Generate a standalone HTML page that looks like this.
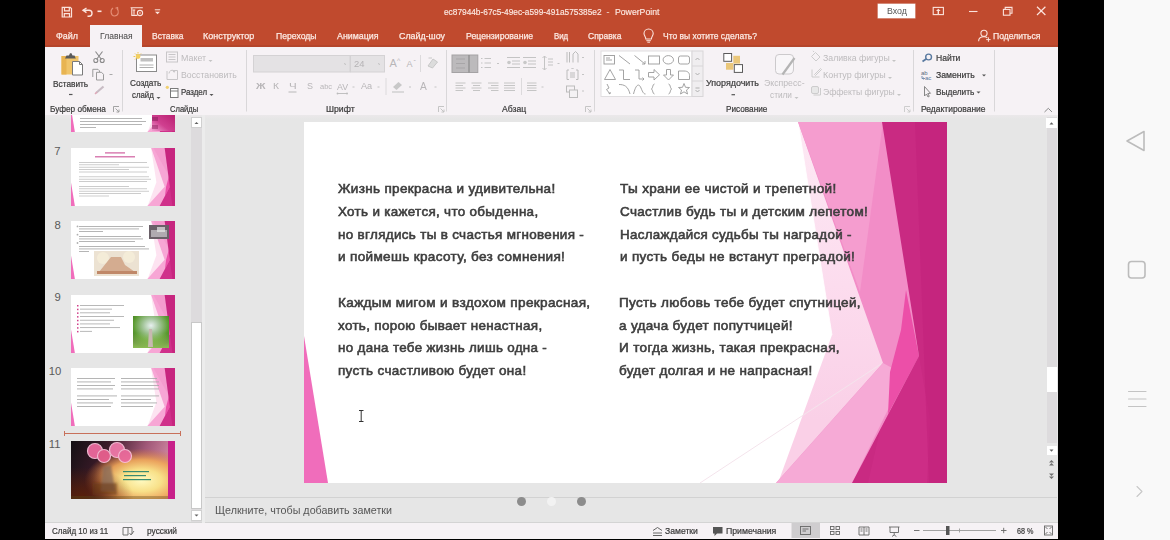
<!DOCTYPE html>
<html><head><meta charset="utf-8">
<style>
*{margin:0;padding:0;box-sizing:border-box}
html,body{width:1170px;height:540px;overflow:hidden;background:#000;font-family:"Liberation Sans",sans-serif}
body{position:relative}
.a{position:absolute}
.t{position:absolute;white-space:nowrap;line-height:1;transform-origin:0 0;color:#444}
svg{position:absolute;overflow:visible}
</style></head><body>
<!-- nav -->
<div class="a" style="left:1104px;top:0;width:66px;height:540px;background:#f9f9f9"></div>
<!-- window backgrounds -->
<div class="a" style="left:45px;top:0;width:1013px;height:539px;background:#e6e6e6"></div>
<div class="a" style="left:45px;top:0;width:1013px;height:47px;background:#c04a2e"></div>
<div class="a" style="left:45px;top:47px;width:1013px;height:68px;background:#f6f2f5"></div>
<div class="a" style="left:90px;top:25px;width:52px;height:23px;background:#f6f2f5"></div>
<div class="a ribbon-shadow" style="left:45px;top:115px;width:1013px;height:4px;background:linear-gradient(#ebe8ea,#e6e6e6)"></div>
<div class="a" style="left:45px;top:45px;width:45px;height:2px;background:#b4452b"></div><div class="a" style="left:142px;top:45px;width:916px;height:2px;background:#b4452b"></div>
<div class="a" style="left:45px;top:523px;width:1013px;height:16px;background:#f6f2f5"></div>
<div class="a" style="left:45px;top:522px;width:1013px;height:1px;background:#d4d4d4"></div>
<!-- thumbnail pane scrollbar -->
<div class="a" style="left:191px;top:117px;width:11px;height:405px;background:#dddbdd"></div>
<div class="a" style="left:191px;top:117px;width:11px;height:11px;background:#fff;border:1px solid #d0d0d0"></div>
<div class="a" style="left:191px;top:322px;width:11px;height:187px;background:#fff;border:1px solid #c8c8c8"></div>
<div class="a" style="left:191px;top:510px;width:11px;height:11px;background:#fff;border:1px solid #d0d0d0"></div>
<div class="a" style="left:202px;top:115px;width:3px;height:408px;background:#ececec"></div>
<!-- notes -->
<div class="a" style="left:205px;top:497px;width:852px;height:1px;background:#d2d2d2"></div>
<div class="a" style="left:516.5px;top:496.5px;width:9px;height:9px;border-radius:50%;background:#8c8c8c"></div>
<div class="a" style="left:546.5px;top:496.5px;width:9px;height:9px;border-radius:50%;background:#f2f2f2"></div>
<div class="a" style="left:576.5px;top:496.5px;width:9px;height:9px;border-radius:50%;background:#8c8c8c"></div>
<!-- main vertical scrollbar -->
<div class="a" style="left:1047px;top:117px;width:10px;height:326px;background:#dddbdd"></div>
<div class="a" style="left:1046px;top:118px;width:11px;height:10px;background:#fff"></div>
<div class="a" style="left:1047px;top:367px;width:10px;height:25px;background:#fff"></div>
<div class="a" style="left:1047px;top:446px;width:10px;height:9px;background:#fff"></div>
<!-- slide -->
<div class="a" style="left:304px;top:122px;width:643px;height:361px;background:#fff;overflow:hidden">
<svg style="left:0;top:0" width="643" height="361" viewBox="304 122 643 361">
<defs><linearGradient id="wedge" gradientUnits="userSpaceOnUse" x1="0" y1="122" x2="0" y2="420"><stop offset="0" stop-color="#fde9f4"/><stop offset="0.55" stop-color="#fcdcee"/><stop offset="1" stop-color="#fad0e7"/></linearGradient></defs>
<polygon points="798,122 832,335 778,483 947,483 947,122" fill="url(#wedge)"/>
<polyline points="798,122 832,335" stroke="#ffffff" stroke-width="1" fill="none" opacity="0.8"/>
<polygon points="798,122 883,363 776,483 947,483 947,122" fill="#f28dc7"/>
<polygon points="798,122 883,122 860,292" fill="#f59dcf"/>
<polygon points="776,483 883,363 905,375 852,483" fill="#f6aad6"/>

<polygon points="906,290 919,356 888,414 890,372 901,330" fill="#ec4fa8"/>
<polygon points="882,122 947,122 947,483 852,483 919,356" fill="#c92a82"/>
<polygon points="919,356 880,430 868,483 927,483 930,420" fill="#d4358f" opacity="0.35"/>
<polygon points="915,122 947,122 947,483 929,483" fill="#c2207a" opacity="0.45"/>
<line x1="700" y1="483" x2="881" y2="364" stroke="#f4e4ec" stroke-width="1"/>
<polygon points="304,336 328,483 304,483" fill="#f06dbb"/>
</svg>
</div>
<!-- thumbnails -->
<div class="a" style="left:71px;top:115px;width:104px;height:17px;overflow:hidden"><div class="a" style="left:0;top:-41px;width:104px;height:58px"><svg style="left:0px;top:0px;filter:blur(0.35px)" width="104" height="58" viewBox="0 0 104 58"><rect width="104" height="58" fill="#fff"/><g transform="scale(0.16174,0.16066)"><polygon points="495,0 528,213 474,361 643,361 643,0" fill="#fde3f1"/>
<polygon points="496,0 579,241 472,361 643,361 643,0" fill="#f7a6d5"/>
<polygon points="510,0 606,175 579,0" fill="#f291c8" opacity="0.5"/>
<polygon points="606,175 615,234 581,298 588,241" fill="#ec50a9"/>
<polygon points="615,234 548,361 643,361 643,234" fill="#d0308b"/>
<polygon points="579,0 643,0 643,361 627,361" fill="#c7267f"/>
<polygon points="0,214 24,361 0,361" fill="#f06dbb"/></g><rect x="9" y="44.0" width="62" height="0.85" fill="#a8a8a8"/><rect x="9" y="47.0" width="66" height="0.85" fill="#a8a8a8"/><rect x="9" y="50.0" width="62" height="0.85" fill="#a8a8a8"/><rect x="9" y="53.0" width="16" height="0.85" fill="#a8a8a8"/><defs><linearGradient id="g6" x1="0" y1="1" x2="1" y2="0"><stop offset="0" stop-color="#f0a0d0"/><stop offset="0.4" stop-color="#d04090"/><stop offset="1" stop-color="#b81e70"/></linearGradient></defs><rect x="81" y="40" width="23" height="17" fill="url(#g6)"/><rect x="81" y="43" width="6" height="4" fill="#902060" opacity="0.6"/><rect x="81" y="51" width="6" height="4" fill="#902060" opacity="0.5"/></svg></div></div>
<svg style="left:71px;top:148px;filter:blur(0.35px)" width="104" height="58" viewBox="0 0 104 58"><rect width="104" height="58" fill="#fff"/><g transform="scale(0.16174,0.16066)"><polygon points="495,0 528,213 474,361 643,361 643,0" fill="#fde3f1"/>
<polygon points="496,0 579,241 472,361 643,361 643,0" fill="#f7a6d5"/>
<polygon points="510,0 606,175 579,0" fill="#f291c8" opacity="0.5"/>
<polygon points="606,175 615,234 581,298 588,241" fill="#ec50a9"/>
<polygon points="615,234 548,361 643,361 643,234" fill="#d0308b"/>
<polygon points="579,0 643,0 643,361 627,361" fill="#c7267f"/>
<polygon points="0,214 24,361 0,361" fill="#f06dbb"/></g><rect x="34" y="4.3" width="20" height="1.2" fill="#d060a0"/><rect x="24" y="8.2" width="40" height="1.2" fill="#d060a0"/><rect x="8" y="14.0" width="68" height="0.8" fill="#c0c0c0"/><rect x="8" y="16.4" width="40" height="0.8" fill="#c0c0c0"/><rect x="8" y="18.8" width="70" height="0.8" fill="#c0c0c0"/><rect x="8" y="21.2" width="50" height="0.8" fill="#c0c0c0"/><rect x="8" y="23.6" width="68" height="0.8" fill="#c0c0c0"/><rect x="8" y="28.4" width="70" height="0.8" fill="#c0c0c0"/><rect x="8" y="30.8" width="72" height="0.8" fill="#c0c0c0"/><rect x="8" y="33.2" width="68" height="0.8" fill="#c0c0c0"/><rect x="8" y="38.0" width="50" height="0.8" fill="#c0c0c0"/><rect x="8" y="40.4" width="68" height="0.8" fill="#c0c0c0"/><rect x="8" y="42.8" width="70" height="0.8" fill="#c0c0c0"/><rect x="8" y="45.2" width="62" height="0.8" fill="#c0c0c0"/><rect x="8" y="47.6" width="30" height="0.8" fill="#c0c0c0"/></svg>
<svg style="left:71px;top:221px;filter:blur(0.35px)" width="104" height="58" viewBox="0 0 104 58"><rect width="104" height="58" fill="#fff"/><g transform="scale(0.16174,0.16066)"><polygon points="495,0 528,213 474,361 643,361 643,0" fill="#fde3f1"/>
<polygon points="496,0 579,241 472,361 643,361 643,0" fill="#f7a6d5"/>
<polygon points="510,0 606,175 579,0" fill="#f291c8" opacity="0.5"/>
<polygon points="606,175 615,234 581,298 588,241" fill="#ec50a9"/>
<polygon points="615,234 548,361 643,361 643,234" fill="#d0308b"/>
<polygon points="579,0 643,0 643,361 627,361" fill="#c7267f"/>
<polygon points="0,214 24,361 0,361" fill="#f06dbb"/></g><rect x="8" y="5.0" width="64" height="0.85" fill="#a8a8a8"/><rect x="8" y="7.5" width="60" height="0.85" fill="#a8a8a8"/><rect x="8" y="10.0" width="24" height="0.85" fill="#a8a8a8"/><rect x="8" y="15.0" width="62" height="0.85" fill="#a8a8a8"/><rect x="8" y="17.5" width="64" height="0.85" fill="#a8a8a8"/><rect x="8" y="20.0" width="56" height="0.85" fill="#a8a8a8"/><rect x="8" y="25.0" width="66" height="0.85" fill="#a8a8a8"/><rect x="8" y="27.5" width="70" height="0.85" fill="#a8a8a8"/><rect x="8" y="30.0" width="10" height="0.85" fill="#a8a8a8"/><rect x="78" y="4" width="20" height="14" fill="#6a6068"/><rect x="80" y="9" width="16" height="7" fill="#b0aab0"/><rect x="86" y="6" width="8" height="5" fill="#e8e8e8" opacity="0.7"/><rect x="23" y="30" width="45" height="25" fill="#ece2d2"/><circle cx="32" cy="37" r="6" fill="#f4ecd8"/><circle cx="58" cy="36" r="6" fill="#f4ecd8"/><polygon points="28,51 40,36 50,36 54,44 64,51" fill="#d4ac90"/><rect x="26" y="50" width="40" height="3" fill="#c08868"/><circle cx="6.5" cy="5.4" r="0.9" fill="#b0b0b0"/><circle cx="6.5" cy="13.7" r="0.9" fill="#b0b0b0"/><circle cx="6.5" cy="22.0" r="0.9" fill="#b0b0b0"/></svg>
<svg style="left:71px;top:295px;filter:blur(0.35px)" width="104" height="58" viewBox="0 0 104 58"><rect width="104" height="58" fill="#fff"/><g transform="scale(0.16174,0.16066)"><polygon points="495,0 528,213 474,361 643,361 643,0" fill="#fde3f1"/>
<polygon points="496,0 579,241 472,361 643,361 643,0" fill="#f7a6d5"/>
<polygon points="510,0 606,175 579,0" fill="#f291c8" opacity="0.5"/>
<polygon points="606,175 615,234 581,298 588,241" fill="#ec50a9"/>
<polygon points="615,234 548,361 643,361 643,234" fill="#d0308b"/>
<polygon points="579,0 643,0 643,361 627,361" fill="#c7267f"/>
<polygon points="0,214 24,361 0,361" fill="#f06dbb"/></g><rect x="6" y="10.0" width="1.5" height="1.5" fill="#d0408a"/><rect x="6" y="13.7" width="1.5" height="1.5" fill="#d0408a"/><rect x="6" y="17.4" width="1.5" height="1.5" fill="#d0408a"/><rect x="6" y="21.1" width="1.5" height="1.5" fill="#d0408a"/><rect x="6" y="24.8" width="1.5" height="1.5" fill="#d0408a"/><rect x="6" y="28.5" width="1.5" height="1.5" fill="#d0408a"/><rect x="6" y="32.2" width="1.5" height="1.5" fill="#d0408a"/><rect x="6" y="35.9" width="1.5" height="1.5" fill="#d0408a"/><rect x="9" y="10.0" width="44" height="0.85" fill="#acacac"/><rect x="9" y="13.7" width="32" height="0.85" fill="#acacac"/><rect x="9" y="17.4" width="30" height="0.85" fill="#acacac"/><rect x="9" y="21.1" width="44" height="0.85" fill="#acacac"/><rect x="9" y="24.8" width="34" height="0.85" fill="#acacac"/><rect x="9" y="28.5" width="30" height="0.85" fill="#acacac"/><rect x="9" y="32.2" width="40" height="0.85" fill="#acacac"/><rect x="9" y="35.9" width="12" height="0.85" fill="#acacac"/><defs><radialGradient id="g9" cx="0.5" cy="0.3" r="0.7"><stop offset="0" stop-color="#e8f0f0"/><stop offset="0.3" stop-color="#a8c8a0"/><stop offset="0.7" stop-color="#5a9a30"/><stop offset="1" stop-color="#3a6a20"/></radialGradient><linearGradient id="g9b" x1="0" y1="0" x2="0" y2="1"><stop offset="0" stop-color="#c0e080" stop-opacity="0"/><stop offset="1" stop-color="#a0d060" stop-opacity="0.8"/></linearGradient></defs><rect x="62" y="21" width="36" height="32" fill="url(#g9)"/><rect x="62" y="38" width="36" height="15" fill="url(#g9b)"/><path d="M78,34 L81,34 L82,52 L77,52 Z" fill="#c8b8b0"/></svg>
<svg style="left:71px;top:368px;filter:blur(0.35px)" width="104" height="58" viewBox="0 0 104 58"><rect width="104" height="58" fill="#fff"/><g transform="scale(0.16174,0.16066)"><polygon points="495,0 528,213 474,361 643,361 643,0" fill="#fde3f1"/>
<polygon points="496,0 579,241 472,361 643,361 643,0" fill="#f7a6d5"/>
<polygon points="510,0 606,175 579,0" fill="#f291c8" opacity="0.5"/>
<polygon points="606,175 615,234 581,298 588,241" fill="#ec50a9"/>
<polygon points="615,234 548,361 643,361 643,234" fill="#d0308b"/>
<polygon points="579,0 643,0 643,361 627,361" fill="#c7267f"/>
<polygon points="0,214 24,361 0,361" fill="#f06dbb"/></g><rect x="6" y="10.0" width="38" height="0.85" fill="#a8a8a8"/><rect x="6" y="13.5" width="34" height="0.85" fill="#a8a8a8"/><rect x="6" y="17.0" width="38" height="0.85" fill="#a8a8a8"/><rect x="6" y="20.5" width="36" height="0.85" fill="#a8a8a8"/><rect x="6" y="27.5" width="40" height="0.85" fill="#a8a8a8"/><rect x="6" y="31.0" width="32" height="0.85" fill="#a8a8a8"/><rect x="6" y="34.5" width="36" height="0.85" fill="#a8a8a8"/><rect x="6" y="38.0" width="34" height="0.85" fill="#a8a8a8"/><rect x="50" y="10.0" width="36" height="0.85" fill="#a8a8a8"/><rect x="50" y="13.5" width="38" height="0.85" fill="#a8a8a8"/><rect x="50" y="17.0" width="38" height="0.85" fill="#a8a8a8"/><rect x="50" y="20.5" width="38" height="0.85" fill="#a8a8a8"/><rect x="50" y="27.5" width="38" height="0.85" fill="#a8a8a8"/><rect x="50" y="31.0" width="30" height="0.85" fill="#a8a8a8"/><rect x="50" y="34.5" width="36" height="0.85" fill="#a8a8a8"/><rect x="50" y="38.0" width="32" height="0.85" fill="#a8a8a8"/></svg>
<svg style="left:71px;top:441px;filter:blur(0.35px)" width="104" height="58" viewBox="0 0 104 58"><rect width="104" height="58" fill="#2a1a20"/><defs>
<linearGradient id="g11b" x1="0" y1="0" x2="1" y2="0.25"><stop offset="0" stop-color="#141014"/><stop offset="0.35" stop-color="#3a1a28"/><stop offset="0.7" stop-color="#a05878"/><stop offset="1" stop-color="#d890a8"/></linearGradient>
<radialGradient id="g11a" cx="0.68" cy="0.68" r="0.55"><stop offset="0" stop-color="#fffac0"/><stop offset="0.35" stop-color="#f8e088"/><stop offset="0.65" stop-color="#f0a858" stop-opacity="0.9"/><stop offset="1" stop-color="#d07030" stop-opacity="0"/></radialGradient>
<radialGradient id="g11c" cx="0.1" cy="0.95" r="0.5"><stop offset="0" stop-color="#5a2008" stop-opacity="0.9"/><stop offset="1" stop-color="#5a2008" stop-opacity="0"/></radialGradient>
<radialGradient id="g11f" cx="0.5" cy="0.5" r="0.5"><stop offset="0.55" stop-color="#ee6a9c"/><stop offset="0.85" stop-color="#f48cb4"/><stop offset="1" stop-color="#f8b0c8" stop-opacity="0"/></radialGradient>
<filter id="bl11"><feGaussianBlur stdDeviation="0.8"/></filter>
</defs>
<rect width="104" height="58" fill="url(#g11b)"/>
<rect width="104" height="58" fill="url(#g11a)"/>
<rect width="104" height="58" fill="url(#g11c)"/>
<rect y="55" width="97" height="3" fill="#5a4a18" opacity="0.35"/>
<g filter="url(#bl11)">
<path d="M30,50 L32,26 L40,24 L44,50 Z" fill="#8a6a58" opacity="0.8"/>
<rect x="22" y="42" width="24" height="12" fill="#6a3a1a" opacity="0.55"/>
</g>
<g stroke="#f8c0d8" stroke-width="1.2" opacity="0.95">
<circle cx="24" cy="10" r="7.5" fill="#ec6a9e"/><circle cx="33" cy="15" r="6.5" fill="#e8608f"/><circle cx="46" cy="9" r="7.5" fill="#ee78a8"/><circle cx="54" cy="15" r="6.5" fill="#ea6a9c"/>
</g>
<rect x="52" y="30" width="26" height="1.2" fill="#3a8a70"/><rect x="53" y="34" width="22" height="1.2" fill="#3a8a70"/><rect x="52" y="38" width="28" height="1.2" fill="#3a8a70"/>
<rect x="97" y="0" width="7" height="58" fill="#c8208a"/></svg>
<div class="a" style="left:65px;top:432.5px;width:115px;height:1px;background:#c8705a"></div><div class="a" style="left:64px;top:430.5px;width:1px;height:5px;background:#c8705a"></div><div class="a" style="left:180px;top:430.5px;width:1px;height:5px;background:#c8705a"></div>
<svg style="left:0;top:0" width="1170" height="50" viewBox="0 0 1170 50" fill="none" stroke="#fbe3dc" stroke-width="1.2">
<!-- save -->
<path d="M62.2,7.3 H70.2 L71.5,8.6 V17 H62.2 Z"/>
<path d="M64.5,7.3 V10.8 H69.3 V7.3"/>
<path d="M64.3,17 V13.6 H69.5 V17"/>
<!-- undo -->
<path d="M86.5,8 L83,10.3 L86.5,12.6" stroke-width="1.4"/>
<path d="M83.2,10.3 H89 A3,3 0 0 1 89,16.3 H87.5" stroke-width="1.4"/>
<path d="M97.5,11.3 H101.5" stroke-width="1.6"/>
<!-- redo faded -->
<path d="M113,8 C110,10 110.5,15.5 114.5,16 C118.5,16 119.5,11 117,8.5 M115.5,8.2 L117.6,7.4 L117.8,9.8" stroke="#e58e76" stroke-width="1.1"/>
<!-- slideshow -->
<path d="M130.6,7.8 H142.8 M131.8,7.8 V15.4 H137.5 M134,10 V14.5 M132.7,10 H135.3" stroke-width="1.1"/>
<circle cx="140" cy="13" r="2.6" stroke-width="1.1"/>
<circle cx="140" cy="13" r="0.8" fill="#fbe3dc" stroke="none"/>
<!-- customize -->
<path d="M154.8,9.8 H160.2" stroke-width="1"/>
<path d="M155,11.8 H160 L157.5,14.3 Z" fill="#fbe3dc" stroke="none"/>
<!-- ribbon display -->
<rect x="933.2" y="7.4" width="10.2" height="7.2" stroke-width="1.1"/>
<path d="M936,11 L938.3,8.8 L940.6,11 Z M937.6,10.8 H939 V14 H937.6Z" fill="#fbe3dc" stroke="none"/>
<!-- minimize -->
<path d="M969,11.5 H977.5" stroke-width="1.1"/>
<!-- restore -->
<path d="M1005.2,9.2 V7.4 H1012 V13.2 H1010" stroke-width="1.1"/>
<rect x="1003.4" y="9.4" width="6.6" height="5.8" stroke-width="1.1"/>
<!-- close -->
<path d="M1037,6.8 L1045.4,15 M1045.4,6.8 L1037,15" stroke-width="1.2"/>
<!-- lightbulb -->
<path d="M645.8,39 C645.8,36.5 644,35.5 644,33.6 A4.6,4.6 0 0 1 653.2,33.6 C653.2,35.5 651.4,36.5 651.4,39 Z" stroke-width="1.1"/>
<path d="M646.3,40.7 H650.9 M647.3,42.2 H650" stroke-width="1"/>
<!-- person -->
<circle cx="984" cy="33.3" r="3.1" stroke-width="1.1"/>
<path d="M978.6,41.3 C978.6,38.2 980.8,36.8 984,36.8 C985.5,36.8 986.6,37.2 987.3,37.8" stroke-width="1.1"/>
<path d="M986.2,39.6 H990.6 M988.4,37.4 V41.8" stroke-width="1"/>
</svg>
<div class="a" style="left:878px;top:4px;width:37px;height:14px;background:#fff;box-shadow:0 0 0 0.5px #e8c8c0"></div>

<svg style="left:0;top:0" width="1170" height="120" viewBox="0 0 1170 120" fill="none" stroke-width="1">
<!-- separators -->
<g stroke="#d9d7d9">
<path d="M122.5,50 V111.5 M246.5,50 V111.5 M446.5,50 V111.5 M594.5,50 V111.5 M913.5,50 V111.5 M994.5,50 V111.5"/>
</g>
<!-- paste -->
<rect x="61.5" y="56" width="17" height="18.5" fill="#f0c46a"/>
<rect x="61.5" y="56" width="5" height="18.5" fill="#e8b452"/>
<path d="M65,58.5 L66.5,55.5 H69 L70,53.2 H71.5 L72.5,55.5 H74.5 L75.8,58.5 Z" fill="#5a5a5a"/>
<path d="M72.5,61.5 H79.5 L82.5,64.5 V75 H72.5 Z" fill="#fff" stroke="#7a7a7a"/>
<path d="M79.5,61.5 V64.5 H82.5" stroke="#7a7a7a"/>
<!-- cut -->
<g stroke="#8a8a8a" stroke-width="1.1">
<path d="M95.5,51.5 L101.5,59.5 M102.5,51.5 L96.5,59.5"/>
<circle cx="95.8" cy="60.5" r="2"/><circle cx="102.2" cy="60.5" r="2"/>
</g>
<!-- copy -->
<g stroke="#9a9a9a">
<path d="M92.8,77 V69.3 H98 L99.5,70.8 V72"/>
<path d="M96.5,72.3 H101.5 L103.5,74.3 V80 H96.5 Z"/>
</g>
<path d="M109.5,74.5 H112.5" stroke="#aaa"/>
<!-- format painter (disabled) -->
<path d="M96,93 L103.5,86.5" stroke="#c8bcc4" stroke-width="2.2"/>
<path d="M95,94 L97,92" stroke="#e0a8b8" stroke-width="1.5"/>
<!-- paste dropdown -->
<path d="M69,94.5 H72.5" stroke="#555" stroke-width="1.2"/>
<!-- dialog launchers -->
<g stroke="#9a9a9a" stroke-width="0.9">
<path d="M113.5,112 V106.5 H119 M115.5,108.5 L119,112 M119,109.5 V112 H116.5"/>
<path d="M438.5,112 V106.5 H444 M440.5,108.5 L444,112 M444,109.5 V112 H441.5" stroke="#c0c0c0"/>
<path d="M585.5,112 V106.5 H591 M587.5,108.5 L591,112 M591,109.5 V112 H588.5" stroke="#c0c0c0"/>
<path d="M904.5,112 V106.5 H910 M906.5,108.5 L910,112 M910,109.5 V112 H907.5" stroke="#c8c8c8"/>
</g>
<!-- new slide -->
<rect x="136.5" y="55" width="20" height="16.5" fill="#fff" stroke="#8a8a8a"/>
<rect x="140.5" y="58" width="12.5" height="3.5" fill="#c0c0c0"/>
<path d="M139.5,65 H153.5 M139.5,67.5 H153.5" stroke="#b0b0b0"/>
<circle cx="138" cy="56.5" r="2.4" fill="#f4d060"/>
<path d="M138,52 V53.5 M133.5,56.5 H135 M135,53.5 L136,54.5 M141,53.5 L140,54.5 M135,59.5 L136,58.5" stroke="#f0c850"/>
<!-- layout -->
<g stroke="#c8c6c8">
<rect x="166.5" y="52" width="11" height="10"/>
<path d="M168.5,54.5 H175.5 M168.5,57 H175.5 M168.5,59.5 H175.5"/>
<!-- reset -->
<path d="M167,71 V79.5 H177.5 V70.5 H173"/>
<path d="M169,73.5 C169,70 174,69 174,72 M172.8,70.8 L174.2,72.3 L175.2,70.5"/>
</g>
<!-- section -->
<rect x="170.5" y="88.5" width="7.5" height="9" fill="#fff" stroke="#7a7a7a"/>
<path d="M170.5,91 H178" stroke="#7a7a7a"/>
<circle cx="167.3" cy="87.3" r="1.6" fill="#f0d070"/>
<!-- font boxes -->
<rect x="253.5" y="55.5" width="96.5" height="16.5" fill="#e4e2e4" stroke="#d4d2d4"/>
<rect x="350.5" y="55.5" width="34" height="16.5" fill="#e4e2e4" stroke="#d4d2d4"/>
<path d="M344,63.5 L346,64.5 M378,63.5 L380,64.5" stroke="#c0c0c0"/>
<!-- disabled text icons drawn as text below in html -->
<!-- clear formatting -->
<path d="M428,66 L433,59 L437.5,62 L432.5,68 Z" stroke="#c8c8c8" fill="#dcdcdc"/>
<path d="M428.5,58 L432,58" stroke="#c8c8c8"/>
<path d="M420.5,55 V72 M386,78 V95 M521.5,78 V95" stroke="#dcdadc"/>
<!-- AV arrows -->
<path d="M337,93.5 H347.5" stroke="#c0c0c0"/>
<circle cx="337.5" cy="93.5" r="0.9" fill="#bbb"/><circle cx="347" cy="93.5" r="0.9" fill="#bbb"/>
<!-- underline for Ч -->
<path d="M288.5,92 H296.5" stroke="#b8b8b8"/>
<!-- highlight icon -->
<path d="M393,87 L398.5,82 L402,85 L396.5,90 Z" fill="#c8c8c8"/>
<path d="M392,92 H404" stroke="#d0d0d0" stroke-width="1.5"/>
<!-- dropdown dashes in font row -->
<g stroke="#c4c4c4"><path d="M352.5,87 H354.5 M377.5,87 H379.5 M409,87 H411 M434.5,87 H436.5 M497,63.5 H499 M557.5,63.5 H559.5 M582,57.5 H584 M582,74.5 H584 M582,91 H584 M541.5,87 H543.5"/></g>
<!-- bullets selected -->
<rect x="452" y="55" width="25.8" height="17.5" fill="#bcbabc" stroke="#a4a2a4"/>
<path d="M469,55 V72.5" stroke="#8a8a8a" stroke-width="1.2"/>
<g stroke="#a8a6a8"><path d="M456,59 H465 M456,63.5 H465 M456,68 H465"/></g>
<!-- numbering -->
<g stroke="#c4c4c4"><path d="M481,58.5 H482.5 M481,63 H482.5 M481,67.5 H482.5 M484.5,58.5 H491 M484.5,63 H491 M484.5,67.5 H491"/></g>
<!-- indent -->
<g stroke="#c4c4c4"><path d="M507,57.5 H520 M512,61 H520 M512,64 H520 M507,67.5 H520 M523,57.5 H536 M528,61 H536 M528,64 H536 M523,67.5 H536"/></g>
<circle cx="509" cy="62.5" r="1.8" fill="#c8c8c8"/><circle cx="525" cy="62.5" r="1.8" fill="#c8c8c8"/>
<!-- line spacing -->
<g stroke="#c4c4c4"><path d="M544.5,56 V70 M542.5,58 L544.5,56 L546.5,58 M542.5,68 L544.5,70 L546.5,68 M548,59 H553 M548,62 H553 M548,65 H553"/></g>
<!-- text direction -->
<g stroke="#bcbcbc"><path d="M567,52 V62.5 M569.5,52 V62.5 M573,62.5 V54 L575.5,51.5 L578,54 V62.5"/></g>
<!-- align text -->
<g stroke="#bcbcbc"><path d="M567,70 V79.5 H569 M578,70 V79.5 H576 M567,70 H569 M576,70 H578 M570,73 H575 M570,75 H575 M570,77 H575"/><path d="M571.5,69 L572.5,68 L573.5,69"/></g>
<!-- smartart -->
<g stroke="#bcbcbc"><rect x="566.5" y="86" width="8" height="6"/><rect x="569.5" y="90" width="8" height="7.5" fill="#f4f2f4"/></g>
<!-- align paragraphs -->
<g stroke="#c0c0c0" stroke-width="0.9">
<path d="M455.5,83 H465.5 M455.5,85.5 H463 M455.5,88 H465.5 M455.5,90.5 H463"/>
<path d="M471.5,83 H481.5 M473,85.5 H480 M471.5,88 H481.5 M473,90.5 H480"/>
<path d="M488,83 H498.5 M491,85.5 H498.5 M488,88 H498.5 M491,90.5 H498.5"/>
<path d="M504,83 H515 M504,85.5 H515 M504,88 H515 M504,90.5 H515"/>
<path d="M527,83 H536.5 M527,85.5 H536.5 M527,88 H536.5 M527,90.5 H536.5"/>
</g>
<!-- shapes gallery -->
<rect x="601" y="51" width="91" height="45.5" fill="#fff" stroke="#e0dee0"/>
<rect x="692" y="51" width="11" height="45.5" fill="#f0eef0" stroke="#d8d6d8"/>
<path d="M692,66 H703 M692,81 H703" stroke="#d8d6d8"/>
<g stroke="#a8a8a8" stroke-width="0.9">
<path d="M695.5,60 L697.5,58 L699.5,60 M695.5,73 L697.5,75 L699.5,73 M695.5,88 H699.5 M695.5,90 L697.5,92 L699.5,90"/>
</g>
<g stroke="#9a9a9a" stroke-width="0.9">
<rect x="604" y="55.5" width="10.5" height="8.5"/><path d="M606,58 H610 M606,60 H612"/>
<path d="M619,55.5 L630,64"/>
<path d="M634.5,55.5 L645,64 M645,61 V64 H642"/>
<rect x="648.5" y="56" width="11" height="8"/>
<ellipse cx="668.3" cy="59.8" rx="5.2" ry="4.2"/>
<rect x="678.5" y="56" width="11" height="8" rx="2"/>
<path d="M610,69.5 L615.5,79.5 H604.5 Z"/>
<path d="M619,70 H623.5 V79.5 H630"/>
<path d="M635,70 H639 V79 H644 M642.5,77.5 L644,79 L642.5,80.5"/>
<path d="M648.5,72.5 H654 V69.5 L659.5,74.8 L654,80 V77 H648.5 Z"/>
<path d="M666.5,69.5 H670.5 V75 H673.5 L668.5,80 L663.5,75 H666.5 Z"/>
<path d="M678.5,71 H684 C688,71 689.5,73 689.5,75.5 V79.5 H678.5 Z"/>
<path d="M607,84 L609,88 L606.5,89.5 L610,94 M608.5,93 L610,94 L610.2,92"/>
<path d="M619,84.5 C624,84.5 628,86 630,94"/>
<path d="M633.5,94 C636,84 639,83 641,88 C643,93 644,94 645.5,94"/>
<path d="M654.5,84 C652.5,84 653,88 651.5,89 C653,90 652.5,94 654.5,94"/>
<path d="M668.5,84 C670.5,84 670,88 671.5,89 C670,90 670.5,94 668.5,94"/>
<path d="M684,83.5 L685.5,87.3 L689.5,87.5 L686.5,90 L687.5,94 L684,91.8 L680.5,94 L681.5,90 L678.5,87.5 L682.5,87.3 Z"/>
</g>
<!-- arrange -->
<rect x="733.3" y="55.8" width="6.7" height="7.8" fill="#eac77a"/>
<rect x="726" y="63" width="7.3" height="6.7" fill="#eac77a"/>
<rect x="723.8" y="53.5" width="7.8" height="7.8" fill="#fff" stroke="#5a5a5a"/>
<rect x="734.3" y="64.6" width="8.2" height="7.8" fill="#fff" stroke="#5a5a5a"/>
<path d="M731.5,94.7 H735" stroke="#555" stroke-width="1.2"/>
<!-- quick styles -->
<path d="M779,54.5 H790 Q793.5,54.5 793.5,58 V69 Q793.5,74 789,74 H779 Q775.5,74 775.5,70.5 V58 Q775.5,54.5 779,54.5 Z" fill="#f8f6f8" stroke="#cccacc"/>
<path d="M794.5,58 L782.5,74.5" stroke="#b4b4b4" stroke-width="2.2"/>
<!-- fill outline effects -->
<g stroke="#c8c8c8" stroke-width="0.9">
<path d="M811.5,56.5 L815.5,52.5 L820,57 L816,61 Z M814,52 L813,50.8"/>
<path d="M812,69.5 V77 H819.5 M814.5,74.5 L820.5,68.5 L821.5,69.5 L815.5,75.5 Z"/>
<rect x="811.5" y="86.5" width="7" height="7" rx="1.5" fill="#e8e8e8"/>
<path d="M813.5,95 H820.5 V88"/>
</g>
<!-- find -->
<circle cx="928.6" cy="57" r="2.9" stroke="#5a7aa0" stroke-width="1.4"/>
<path d="M922.5,61.5 L926.5,58.8" stroke="#5a7aa0" stroke-width="1.8"/>
<!-- replace -->
<text x="921" y="74.5" font-family="Liberation Sans" font-size="6" fill="#5a6a80">ab</text>
<text x="925" y="79.5" font-family="Liberation Sans" font-size="6" fill="#5a7aa0">ac</text>
<path d="M922,76 V78.5 H924.5 M923.5,77.5 L924.5,78.5 L923.5,79.5" stroke="#5a7aa0" stroke-width="0.8"/>
<!-- select -->
<path d="M924.5,86.5 V96 L926.5,94 L928,97 L929.3,96.3 L927.8,93.5 L930.5,93.3 Z" stroke="#7a7a7a" stroke-width="0.9"/>
<!-- dropdowns -->
<g fill="#555">
<path d="M982,74.5 H986 L984,76.5 Z"/>
<path d="M976.5,91.5 H980.5 L978.5,93.5 Z"/>
<path d="M209.5,94 H213.5 L211.5,96 Z"/>
<path d="M156.5,97 H160.5 L158.5,99 Z"/>
</g>
<g fill="#c4c4c4">
<path d="M208.5,60 H212.5 L210.5,62 Z"/>
<path d="M892,60 H896 L894,62 Z"/>
<path d="M888,77 H892 L890,79 Z"/>
<path d="M897,94 H901 L899,96 Z"/>
<path d="M794.5,97 H798.5 L796.5,99 Z"/>
</g>
<!-- collapse ribbon -->
<path d="M1044.5,112 L1048.3,108.3 L1052,112" stroke="#8a8a8a" stroke-width="1"/>
</svg>

<svg style="left:0;top:0" width="1170" height="540" viewBox="0 0 1170 540" fill="none" stroke-width="1">
<!-- thumbnail pane scroll arrows -->
<path d="M194.5,124 L196.5,122 L198.5,124 Z" fill="#606060"/>
<path d="M194.5,514.5 H198.5 L196.5,516.5 Z" fill="#606060"/>
<!-- main scroll arrows -->
<path d="M1049.5,124.5 L1051.5,122.3 L1053.5,124.5 Z" fill="#606060"/>
<path d="M1049.5,449.5 H1053.5 L1051.5,451.7 Z" fill="#606060"/>
<g fill="#707070">
<path d="M1049,462.5 L1051.5,460 L1054,462.5 Z M1049,465.5 L1051.5,463 L1054,465.5 Z"/>
<path d="M1049,473.5 L1051.5,476 L1054,473.5 Z M1049,476.5 L1051.5,479 L1054,476.5 Z"/>
</g>
<!-- I-beam cursor -->
<path d="M359,410.5 H363.5 M359,421.5 H363.5 M361.2,410.5 V421.5" stroke="#333" stroke-width="1"/>
<!-- status bar icons -->
<g stroke="#666" stroke-width="0.9">
<path d="M123,527.5 V535 H128 M123,527.5 H128 V535 M128,527.5 H132 V534" />
<path d="M129.5,533 L131,535 L134,531"/>
</g>
<!-- notes icon -->
<g stroke="#555" stroke-width="0.9"><path d="M653,530.5 L657.5,527.5 L662,530.5 M653,533 H662 M653,535.5 H662"/></g>
<!-- comment icon -->
<path d="M713,527 H722.5 V533.5 H717 L714.5,536 V533.5 H713 Z" fill="#555"/>
<!-- view buttons -->
<rect x="791.5" y="523" width="28.5" height="15" fill="#cfcdcf"/>
<g stroke="#666" stroke-width="0.9">
<rect x="800.5" y="526.5" width="10" height="8"/><path d="M802.5,529 H808.5 M802.5,531 H806"/>
<rect x="830.5" y="526.5" width="3.5" height="3"/><rect x="836" y="526.5" width="3.5" height="3"/><rect x="830.5" y="531.5" width="3.5" height="3"/><rect x="836" y="531.5" width="3.5" height="3"/>
<path d="M859,527 V535 H869 V527 Z M864,527 V535 M860.5,529 H862.5 M860.5,531 H862.5 M865.5,529 H867.5 M865.5,531 H867.5"/>
<path d="M889,527 H899.5 M890,527 V532.5 H898.5 V527 M894.2,532.5 V535 M892,536.5 L894.2,535 L896.4,536.5"/>
<path d="M914,530.5 H919.5 M1001,530.5 H1006.5 M1003.7,527.8 V533.2"/>
<path d="M923,530.5 H996" stroke="#999"/>
<path d="M959.5,528.5 V532.5" stroke="#999"/>
<rect x="1044.5" y="526" width="8" height="9"/>
<path d="M1045.5,527 L1047.5,529 M1051.5,527 L1049.5,529 M1045.5,534 L1047.5,532 M1051.5,534 L1049.5,532"/>
</g>
<rect x="946" y="526" width="3.5" height="9" fill="#555"/>
<!-- android nav -->
<g stroke="#bcbcbc" stroke-width="1.6" stroke-linejoin="round" stroke-linecap="round">
<path d="M1144,131.5 V150.5 L1127,141 Z"/>
<rect x="1128.5" y="261.5" width="16.5" height="16.5" rx="3"/>
<path d="M1128.5,391.5 H1146 M1128.5,399 H1146 M1128.5,406.5 H1146" stroke-width="1.1" stroke="#c4c4c4"/>
<path d="M1137,486.5 L1142,491.5 L1137,496.5" stroke-width="1.1" stroke="#c8c8c8"/>
</g>
</svg>

<div class="t" style="left:444px;top:7.68px;font-size:9px;color:#fbe6df;transform:scaleX(0.923);-webkit-text-stroke:0.15px #fdeee8;">ec87944b-67c5-49ec-a599-491a575385e2</div>
<div class="t" style="left:606.5px;top:7.68px;font-size:9px;color:#fbe6df;transform:scaleX(1.000);">-</div>
<div class="t" style="left:614.6px;top:7.68px;font-size:9px;color:#fbe6df;transform:scaleX(0.965);-webkit-text-stroke:0.15px #fdeee8;">PowerPoint</div>
<div class="t" style="left:887px;top:7.38px;font-size:9px;color:#555;transform:scaleX(0.982);">Вход</div>
<div class="t" style="left:56px;top:31.55px;font-size:8.8px;color:#fbe6df;transform:scaleX(1.017);-webkit-text-stroke:0.25px #fdeee8;">Файл</div>
<div class="t" style="left:152px;top:31.55px;font-size:8.8px;color:#fbe6df;transform:scaleX(0.963);-webkit-text-stroke:0.25px #fdeee8;">Вставка</div>
<div class="t" style="left:203.4px;top:31.55px;font-size:8.8px;color:#fbe6df;transform:scaleX(1.022);-webkit-text-stroke:0.25px #fdeee8;">Конструктор</div>
<div class="t" style="left:275.9px;top:31.55px;font-size:8.8px;color:#fbe6df;transform:scaleX(0.981);-webkit-text-stroke:0.25px #fdeee8;">Переходы</div>
<div class="t" style="left:337px;top:31.55px;font-size:8.8px;color:#fbe6df;transform:scaleX(1.005);-webkit-text-stroke:0.25px #fdeee8;">Анимация</div>
<div class="t" style="left:399px;top:31.55px;font-size:8.8px;color:#fbe6df;transform:scaleX(1.009);-webkit-text-stroke:0.25px #fdeee8;">Слайд-шоу</div>
<div class="t" style="left:465.6px;top:31.55px;font-size:8.8px;color:#fbe6df;transform:scaleX(0.989);-webkit-text-stroke:0.25px #fdeee8;">Рецензирование</div>
<div class="t" style="left:553.6px;top:31.55px;font-size:8.8px;color:#fbe6df;transform:scaleX(0.892);-webkit-text-stroke:0.25px #fdeee8;">Вид</div>
<div class="t" style="left:588.4px;top:31.55px;font-size:8.8px;color:#fbe6df;transform:scaleX(0.968);-webkit-text-stroke:0.25px #fdeee8;">Справка</div>
<div class="t" style="left:663px;top:31.55px;font-size:8.8px;color:#fbe6df;transform:scaleX(0.967);-webkit-text-stroke:0.25px #fdeee8;">Что вы хотите сделать?</div>
<div class="t" style="left:992.5px;top:31.55px;font-size:8.8px;color:#fbe6df;transform:scaleX(0.978);-webkit-text-stroke:0.25px #fdeee8;">Поделиться</div>
<div class="t" style="left:99.7px;top:31.55px;font-size:8.8px;color:#444;transform:scaleX(0.971);">Главная</div>
<div class="t" style="left:52.8px;top:79.50px;font-size:8.5px;color:#3a3a3a;transform:scaleX(0.977);-webkit-text-stroke:0.2px #3a3a3a;">Вставить</div>
<div class="t" style="left:49.8px;top:104.80px;font-size:8.5px;color:#3a3a3a;transform:scaleX(0.968);-webkit-text-stroke:0.2px #3a3a3a;">Буфер обмена</div>
<div class="t" style="left:130.1px;top:79.30px;font-size:8.5px;color:#3a3a3a;transform:scaleX(0.969);-webkit-text-stroke:0.2px #3a3a3a;">Создать</div>
<div class="t" style="left:132.2px;top:91.10px;font-size:8.5px;color:#3a3a3a;transform:scaleX(0.922);-webkit-text-stroke:0.2px #3a3a3a;">слайд</div>
<div class="t" style="left:180.9px;top:54.10px;font-size:8.5px;color:#bdbbbd;transform:scaleX(1.043);">Макет</div>
<div class="t" style="left:180.9px;top:71.10px;font-size:8.5px;color:#bdbbbd;transform:scaleX(1.027);">Восстановить</div>
<div class="t" style="left:180.9px;top:88.20px;font-size:8.5px;color:#3a3a3a;transform:scaleX(0.929);-webkit-text-stroke:0.2px #3a3a3a;">Раздел</div>
<div class="t" style="left:169.8px;top:104.80px;font-size:8.5px;color:#3a3a3a;transform:scaleX(0.891);-webkit-text-stroke:0.2px #3a3a3a;">Слайды</div>
<div class="t" style="left:325.7px;top:104.80px;font-size:8.5px;color:#3a3a3a;transform:scaleX(1.026);-webkit-text-stroke:0.2px #3a3a3a;">Шрифт</div>
<div class="t" style="left:502px;top:104.80px;font-size:8.5px;color:#3a3a3a;transform:scaleX(1.014);-webkit-text-stroke:0.2px #3a3a3a;">Абзац</div>
<div class="t" style="left:706.3px;top:79.30px;font-size:8.5px;color:#3a3a3a;transform:scaleX(1.048);-webkit-text-stroke:0.2px #3a3a3a;">Упорядочить</div>
<div class="t" style="left:763.8px;top:79.30px;font-size:8.5px;color:#bdbbbd;transform:scaleX(1.026);">Экспресс-</div>
<div class="t" style="left:770px;top:91.10px;font-size:8.5px;color:#bdbbbd;transform:scaleX(0.973);">стили</div>
<div class="t" style="left:726px;top:104.80px;font-size:8.5px;color:#3a3a3a;transform:scaleX(0.967);-webkit-text-stroke:0.2px #3a3a3a;">Рисование</div>
<div class="t" style="left:823.3px;top:54.10px;font-size:8.5px;color:#bdbbbd;transform:scaleX(1.027);">Заливка фигуры</div>
<div class="t" style="left:823.3px;top:71.10px;font-size:8.5px;color:#bdbbbd;transform:scaleX(1.055);">Контур фигуры</div>
<div class="t" style="left:823.3px;top:88.20px;font-size:8.5px;color:#bdbbbd;transform:scaleX(1.012);">Эффекты фигуры</div>
<div class="t" style="left:935.6px;top:54.10px;font-size:8.5px;color:#3a3a3a;transform:scaleX(1.006);-webkit-text-stroke:0.2px #3a3a3a;">Найти</div>
<div class="t" style="left:935.6px;top:71.10px;font-size:8.5px;color:#3a3a3a;transform:scaleX(1.016);-webkit-text-stroke:0.2px #3a3a3a;">Заменить</div>
<div class="t" style="left:935.6px;top:88.20px;font-size:8.5px;color:#3a3a3a;transform:scaleX(0.979);-webkit-text-stroke:0.2px #3a3a3a;">Выделить</div>
<div class="t" style="left:921px;top:104.80px;font-size:8.5px;color:#3a3a3a;transform:scaleX(0.997);-webkit-text-stroke:0.2px #3a3a3a;">Редактирование</div>
<div class="t" style="left:353.5px;top:59.80px;font-size:8.5px;color:#b5b3b5;transform:scaleX(1.109);">24</div>
<div class="t" style="left:54.3px;top:145.93px;font-size:11.3px;color:#5a5a5a;">7</div>
<div class="t" style="left:54.5px;top:219.83px;font-size:11.3px;color:#5a5a5a;">8</div>
<div class="t" style="left:54.5px;top:292.13px;font-size:11.3px;color:#5a5a5a;">9</div>
<div class="t" style="left:48.8px;top:365.93px;font-size:11.3px;color:#5a5a5a;">10</div>
<div class="t" style="left:48.8px;top:439.23px;font-size:11.3px;color:#5a5a5a;">11</div>
<div class="t" style="left:214.6px;top:504.74px;font-size:10.7px;color:#555;transform:scaleX(1.003);">Щелкните, чтобы добавить заметки</div>
<div class="t" style="left:51.7px;top:526.70px;font-size:8.5px;color:#3a3a3a;transform:scaleX(0.942);-webkit-text-stroke:0.2px #3a3a3a;">Слайд 10 из 11</div>
<div class="t" style="left:147px;top:526.70px;font-size:8.5px;color:#3a3a3a;transform:scaleX(0.983);-webkit-text-stroke:0.2px #3a3a3a;">русский</div>
<div class="t" style="left:664.7px;top:526.70px;font-size:8.5px;color:#3a3a3a;transform:scaleX(1.012);-webkit-text-stroke:0.2px #3a3a3a;">Заметки</div>
<div class="t" style="left:725.8px;top:526.70px;font-size:8.5px;color:#3a3a3a;transform:scaleX(1.025);-webkit-text-stroke:0.2px #3a3a3a;">Примечания</div>
<div class="t" style="left:1017.3px;top:526.70px;font-size:8.5px;color:#3a3a3a;transform:scaleX(0.846);-webkit-text-stroke:0.2px #3a3a3a;">68 %</div>
<div class="t" style="left:337.5px;top:183.22px;font-size:12.5px;color:#404040;transform:scaleX(1.081);letter-spacing:0.3px;-webkit-text-stroke:0.55px #3c3c3c;">Жизнь прекрасна и удивительна!</div>
<div class="t" style="left:337.5px;top:206.02px;font-size:12.5px;color:#404040;transform:scaleX(1.072);letter-spacing:0.3px;-webkit-text-stroke:0.55px #3c3c3c;">Хоть и кажется, что обыденна,</div>
<div class="t" style="left:337.5px;top:228.72px;font-size:12.5px;color:#404040;transform:scaleX(1.075);letter-spacing:0.3px;-webkit-text-stroke:0.55px #3c3c3c;">но вглядись ты в счастья мгновения -</div>
<div class="t" style="left:337.5px;top:251.42px;font-size:12.5px;color:#404040;transform:scaleX(1.085);letter-spacing:0.3px;-webkit-text-stroke:0.55px #3c3c3c;">и поймешь красоту, без сомнения!</div>
<div class="t" style="left:337.5px;top:296.92px;font-size:12.5px;color:#404040;transform:scaleX(1.088);letter-spacing:0.3px;-webkit-text-stroke:0.55px #3c3c3c;">Каждым мигом и вздохом прекрасная,</div>
<div class="t" style="left:337.5px;top:319.62px;font-size:12.5px;color:#404040;transform:scaleX(1.075);letter-spacing:0.3px;-webkit-text-stroke:0.55px #3c3c3c;">хоть, порою бывает ненастная,</div>
<div class="t" style="left:337.5px;top:342.32px;font-size:12.5px;color:#404040;transform:scaleX(1.070);letter-spacing:0.3px;-webkit-text-stroke:0.55px #3c3c3c;">но дана тебе жизнь лишь одна -</div>
<div class="t" style="left:337.5px;top:365.02px;font-size:12.5px;color:#404040;transform:scaleX(1.078);letter-spacing:0.3px;-webkit-text-stroke:0.55px #3c3c3c;">пусть счастливою будет она!</div>
<div class="t" style="left:619.9px;top:183.22px;font-size:12.5px;color:#404040;transform:scaleX(1.083);letter-spacing:0.3px;-webkit-text-stroke:0.55px #3c3c3c;">Ты храни ее чистой и трепетной!</div>
<div class="t" style="left:619.9px;top:206.02px;font-size:12.5px;color:#404040;transform:scaleX(1.079);letter-spacing:0.3px;-webkit-text-stroke:0.55px #3c3c3c;">Счастлив будь ты и детским лепетом!</div>
<div class="t" style="left:619.9px;top:228.72px;font-size:12.5px;color:#404040;transform:scaleX(1.068);letter-spacing:0.3px;-webkit-text-stroke:0.55px #3c3c3c;">Наслаждайся судьбы ты наградой -</div>
<div class="t" style="left:619.9px;top:251.42px;font-size:12.5px;color:#404040;transform:scaleX(1.080);letter-spacing:0.3px;-webkit-text-stroke:0.55px #3c3c3c;">и пусть беды не встанут преградой!</div>
<div class="t" style="left:619.4px;top:296.92px;font-size:12.5px;color:#404040;transform:scaleX(1.082);letter-spacing:0.3px;-webkit-text-stroke:0.55px #3c3c3c;">Пусть любовь тебе будет спутницей,</div>
<div class="t" style="left:619.4px;top:319.62px;font-size:12.5px;color:#404040;transform:scaleX(1.081);letter-spacing:0.3px;-webkit-text-stroke:0.55px #3c3c3c;">а удача будет попутчицей!</div>
<div class="t" style="left:619.4px;top:342.32px;font-size:12.5px;color:#404040;transform:scaleX(1.085);letter-spacing:0.3px;-webkit-text-stroke:0.55px #3c3c3c;">И тогда жизнь, такая прекрасная,</div>
<div class="t" style="left:619.4px;top:365.02px;font-size:12.5px;color:#404040;transform:scaleX(1.078);letter-spacing:0.3px;-webkit-text-stroke:0.55px #3c3c3c;">будет долгая и не напрасная!</div>
<div class="t" style="left:389.4px;top:58.39px;font-size:11px;color:#b8b6b8;">A</div>
<div class="t" style="left:406.5px;top:60.08px;font-size:9px;color:#b8b6b8;">A</div>
<div class="t" style="left:256px;top:82.38px;font-size:9px;font-weight:700;color:#b8b6b8;transform:scaleX(1.167);">Ж</div>
<div class="t" style="left:273.2px;top:82.38px;font-size:9px;color:#b8b6b8;transform:scaleX(1.143);">К</div>
<div class="t" style="left:288.6px;top:82.38px;font-size:9px;color:#b8b6b8;transform:scaleX(1.283);">Ч</div>
<div class="t" style="left:306.5px;top:82.38px;font-size:9px;color:#b8b6b8;transform:scaleX(0.997);">S</div>
<div class="t" style="left:320.2px;top:83.23px;font-size:8px;color:#b8b6b8;transform:scaleX(0.930);">abc</div>
<div class="t" style="left:336.5px;top:82.80px;font-size:8.5px;color:#b8b6b8;transform:scaleX(1.036);">AV</div>
<div class="t" style="left:361.2px;top:82.38px;font-size:9px;color:#b8b6b8;transform:scaleX(1.017);">Aa</div>
<div class="t" style="left:420.2px;top:81.53px;font-size:10px;color:#b8b6b8;transform:scaleX(1.019);">A</div>
<div class="t" style="left:397px;top:57.07px;font-size:7px;color:#b8b6b8;">^</div>
<div class="t" style="left:413.5px;top:59.07px;font-size:7px;color:#b8b6b8;">ˇ</div>

</body></html>
